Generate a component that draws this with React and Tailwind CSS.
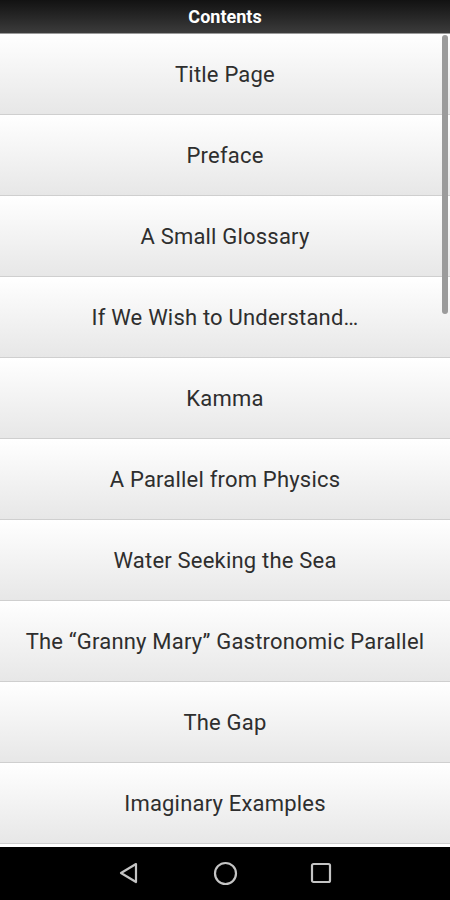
import React from 'react';

const chapters = [
  'Title Page',
  'Preface',
  'A Small Glossary',
  'If We Wish to Understand…',
  'Kamma',
  'A Parallel from Physics',
  'Water Seeking the Sea',
  'The \u201CGranny Mary\u201D Gastronomic Parallel',
  'The Gap',
  'Imaginary Examples',
];

function NavBar() {
  return (
    <div className="h-[53px] bg-black flex items-center justify-center">
      <div className="relative w-full h-full">
        <svg className="absolute left-[119px] top-[15px]" width="20" height="22" viewBox="0 0 20 22" fill="none">
          <path d="M17 2 L2 11 L17 20 Z" stroke="#c4c4c4" strokeWidth="2.2" strokeLinejoin="round" />
        </svg>
        <svg className="absolute left-[213px] top-[14px]" width="25" height="25" viewBox="0 0 25 25" fill="none">
          <circle cx="12.5" cy="12.5" r="10.5" stroke="#c4c4c4" strokeWidth="2.2" />
        </svg>
        <svg className="absolute left-[310px] top-[15px]" width="22" height="22" viewBox="0 0 22 22" fill="none">
          <rect x="2" y="2" width="18" height="18" rx="1.5" stroke="#c4c4c4" strokeWidth="2.2" />
        </svg>
      </div>
    </div>
  );
}

export default function App() {
  return (
    <div className="w-[450px] h-[900px] bg-white flex flex-col overflow-hidden" style={{ fontFamily: 'Roboto, "Noto Sans", sans-serif' }}>
      <div className="h-[34px] bg-gradient-to-b from-[#121212] to-[#3c3c3c] border-b border-[#9a9a9a] flex items-center justify-center">
        <span className="text-white text-[18px] font-bold">Contents</span>
      </div>
      <div className="relative flex-1 flex flex-col">
        {chapters.map((c) => (
          <div
            key={c}
            className="h-[81px] shrink-0 border-b border-[#cfcfcf] bg-gradient-to-b from-[#ffffff] to-[#e7e7e7] flex items-center justify-center"
          >
            <span className="text-[22px] tracking-[0.2px] text-[#2e2e2e]">{c}</span>
          </div>
        ))}
        <div className="absolute right-[2px] top-[1px] w-[6px] h-[279px] rounded-full bg-[#9b9b9b]" />
      </div>
      <NavBar />
    </div>
  );
}
